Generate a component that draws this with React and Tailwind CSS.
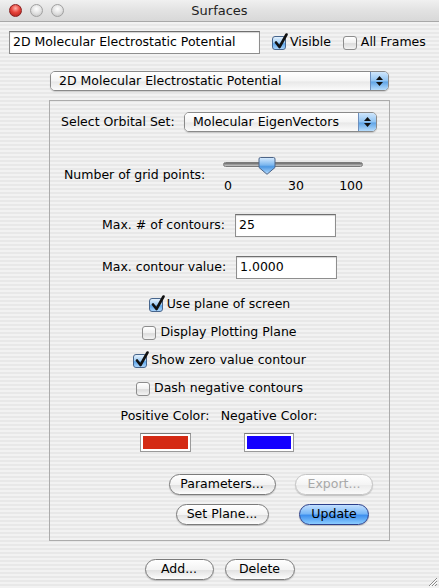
import React from 'react'

const STRIPES =
  'bg-[repeating-linear-gradient(180deg,#e8e8e8_0px,#e8e8e8_2px,#f2f2f2_2px,#f2f2f2_4px)]'

function Light({ red }) {
  return (
    <div
      className={
        'w-[13px] h-[13px] rounded-full border ' +
        (red
          ? 'border-[#8a1f1f] bg-[radial-gradient(circle_at_50%_30%,#ffb0a8_0%,#e8453c_45%,#a81c16_100%)]'
          : 'border-[#a0a0a0] bg-[radial-gradient(circle_at_50%_35%,#ffffff_0%,#e2e2e2_50%,#bdbdbd_100%)]')
      }
    />
  )
}

function Check({ checked, label }) {
  return (
    <div className="flex items-center h-[17px]">
      <div
        className={
          'relative w-[14px] h-[14px] rounded-[3px] border ' +
          (checked
            ? 'border-[#47658c] bg-[linear-gradient(180deg,#e4f1fd_0%,#9ccaf3_50%,#5ea6ea_55%,#a9d4fb_100%)]'
            : 'border-[#8d8d8d] bg-[linear-gradient(180deg,#ffffff_0%,#f0f0f0_50%,#dcdcdc_55%,#f4f4f4_100%)]')
        }
      >
        {checked && (
          <svg className="absolute left-[1px] top-[-4px]" width="14" height="17" viewBox="0 0 14 17">
            <path d="M2 9.5 L5.5 14 L12.5 1.5" fill="none" stroke="#111" strokeWidth="2.6" strokeLinecap="round" strokeLinejoin="round" />
          </svg>
        )}
      </div>
      <span className="ml-[4px] text-[12.5px] text-black leading-none">{label}</span>
    </div>
  )
}

function Field({ value, className }) {
  return (
    <div
      className={
        'h-[23px] bg-white border border-[#8e8e8e] border-t-[#6f6f6f] shadow-[inset_0_1px_1px_rgba(0,0,0,0.18)] flex items-center pl-[3px] text-[12.5px] text-black ' +
        className
      }
    >
      {value}
    </div>
  )
}

function Popup({ label, className }) {
  return (
    <div
      className={
        'h-[20px] rounded-[5px] border border-[#8a8a8a] flex overflow-hidden shadow-[0_1px_1px_rgba(0,0,0,0.15)] ' +
        className
      }
    >
      <div className="flex-1 flex items-center pl-[8px] text-[12.5px] text-black bg-[linear-gradient(180deg,#ffffff_0%,#f4f4f4_50%,#e8e8e8_55%,#fbfbfb_100%)]">
        {label}
      </div>
      <div className="w-[18px] flex flex-col items-center justify-center gap-[2px] border-l border-[#6d8fbd] bg-[linear-gradient(180deg,#cfe6fc_0%,#8fc3f2_50%,#5fa4e6_55%,#b6dcfc_100%)]">
        <svg width="7" height="4" viewBox="0 0 7 4"><path d="M3.5 0 L7 4 L0 4Z" fill="#111" /></svg>
        <svg width="7" height="4" viewBox="0 0 7 4"><path d="M0 0 L7 0 L3.5 4Z" fill="#111" /></svg>
      </div>
    </div>
  )
}

function Button({ children, className, kind }) {
  const skin =
    kind === 'default'
      ? 'border-[#2b3f8a] text-black bg-[linear-gradient(180deg,#c3e0ff_0%,#7ab8f7_45%,#3f90ee_55%,#8ccdff_100%)]'
      : kind === 'disabled'
      ? 'border-[#c4c4c4] text-[#a8a8a8] bg-[linear-gradient(180deg,#ffffff_0%,#f4f4f4_50%,#ececec_55%,#fafafa_100%)]'
      : 'border-[#7b7b7b] text-black bg-[linear-gradient(180deg,#ffffff_0%,#f3f3f3_50%,#e2e2e2_55%,#fdfdfd_100%)]'
  return (
    <div
      className={
        'h-[21px] rounded-full border flex items-center justify-center text-[12.5px] shadow-[0_1px_1px_rgba(0,0,0,0.2)] ' +
        skin +
        ' ' +
        className
      }
    >
      {children}
    </div>
  )
}

function Slider() {
  return (
    <div className="w-[140px] h-[36px] flex flex-col">
      <div className="relative h-[17px]">
        <div className="absolute left-0 right-0 top-[5px] h-[5px] rounded-full bg-[linear-gradient(180deg,#6a6a6a_0%,#9a9a9a_50%,#c8c8c8_100%)] border border-[#7a7a7a]" />
        <svg className="absolute left-[35px] top-0" width="18" height="18" viewBox="0 0 18 18">
          <defs>
            <linearGradient id="thumb" x1="0" y1="0" x2="0" y2="1">
              <stop offset="0" stopColor="#d9ecff" />
              <stop offset="0.45" stopColor="#7bb6ee" />
              <stop offset="0.55" stopColor="#4d98e3" />
              <stop offset="1" stopColor="#b9ddfd" />
            </linearGradient>
          </defs>
          <path d="M2.5 0.5 H15.5 Q17 0.5 17 2 V10.5 L9 17.3 L1 10.5 V2 Q1 0.5 2.5 0.5Z" fill="url(#thumb)" stroke="#4c6487" strokeWidth="1" />
        </svg>
      </div>
      <div className="relative h-[19px] text-[12.5px] text-black">
        <span className="absolute left-[1px] top-[3px]">0</span>
        <span className="absolute left-[65px] top-[3px]">30</span>
        <span className="absolute right-[0px] top-[3px]">100</span>
      </div>
    </div>
  )
}

export default function App() {
  return (
    <div
      className={
        'relative w-[439px] h-[588px] overflow-hidden [font-family:"Lucida_Grande","DejaVu_Sans",sans-serif] text-black ' +
        STRIPES
      }
    >
      {/* title bar */}
      <div className="relative h-[22px] flex items-center border-b border-[#a8a8a8] bg-[linear-gradient(180deg,#f0f0f0_0%,#e2e2e2_50%,#d8d8d8_100%)]">
        <div className="flex items-center gap-[8px] pl-[9px]">
          <Light red />
          <Light />
          <Light />
        </div>
        <div className="absolute inset-0 flex items-center justify-center text-[13px] text-[#222]">Surfaces</div>
      </div>

      {/* name row */}
      <div className="flex items-center mt-[9px] pl-[9px]">
        <Field value="2D Molecular Electrostatic Potential" className="w-[251px]" />
        <div className="ml-[12px]">
          <Check checked label="Visible" />
        </div>
        <div className="ml-[12px]">
          <Check label="All Frames" />
        </div>
      </div>

      <div className="flex justify-center mt-[17px]">
        <Popup label="2D Molecular Electrostatic Potential" className="w-[339px]" />
      </div>

      {/* group box */}
      <div className="ml-[49px] mt-[9px] w-[341px] h-[441px] border border-[#acacac] flex flex-col">
        <div className="flex items-center mt-[11px] pl-[11px]">
          <div className="w-[123px] text-[12.5px]">Select Orbital Set:</div>
          <Popup label="Molecular EigenVectors" className="w-[193px]" />
        </div>

        <div className="flex items-center mt-[25px] pl-[14px]">
          <div className="w-[159px] text-[12.5px]">Number of grid points:</div>
          <Slider />
        </div>

        <div className="flex items-center mt-[21px] pl-[52px]">
          <div className="w-[133px] text-[12.5px]">Max. # of contours:</div>
          <Field value="25" className="w-[101px]" />
        </div>

        <div className="flex items-center mt-[19px] pl-[52px]">
          <div className="w-[134px] text-[12.5px]">Max. contour value:</div>
          <Field value="1.0000" className="w-[101px]" />
        </div>

        <div className="flex flex-col items-center mt-[17px] gap-[11px]">
          <Check checked label="Use plane of screen" />
          <Check label="Display Plotting Plane" />
          <Check checked label="Show zero value contour" />
          <Check label="Dash negative contours" />
        </div>

        <div className="flex ml-[63px] mt-[11px]">
          <div className="w-[104px] flex flex-col items-center">
            <div className="h-[17px] flex items-center text-[12.5px]">Positive Color:</div>
            <div className="mt-[8px] w-[51px] h-[19px] border border-[#9a9a9a] border-t-[#7a7a7a] bg-white p-[2px]">
              <div className="w-full h-full bg-[#d42a14]" />
            </div>
          </div>
          <div className="w-[104px] flex flex-col items-center">
            <div className="h-[17px] flex items-center text-[12.5px]">Negative Color:</div>
            <div className="mt-[8px] w-[50px] h-[19px] border border-[#9a9a9a] border-t-[#7a7a7a] bg-white p-[2px]">
              <div className="w-full h-full bg-[#1400ff]" />
            </div>
          </div>
        </div>

        <div className="grid grid-cols-[120px_104px] ml-[112px] mt-[22px] gap-y-[9px]">
          <div className="flex justify-center">
            <Button className="w-[107px]">Parameters...</Button>
          </div>
          <div className="flex justify-center">
            <Button kind="disabled" className="w-[78px]">Export...</Button>
          </div>
          <div className="flex justify-center">
            <Button className="w-[93px]">Set Plane...</Button>
          </div>
          <div className="flex justify-center">
            <Button kind="default" className="w-[70px]">Update</Button>
          </div>
        </div>
      </div>

      <div className="flex justify-center gap-[11px] mt-[18px]">
        <Button className="w-[69px]">Add...</Button>
        <Button className="w-[70px]">Delete</Button>
      </div>

      {/* resize grip */}
      <svg className="absolute right-[1px] bottom-[1px]" width="12" height="12" viewBox="0 0 12 12">
        <path d="M11 3 L3 11 M11 6 L6 11 M11 9 L9 11" stroke="#8a8a8a" strokeWidth="1" />
        <path d="M11 4 L4 11 M11 7 L7 11" stroke="#ffffff" strokeWidth="1" />
      </svg>
    </div>
  )
}
